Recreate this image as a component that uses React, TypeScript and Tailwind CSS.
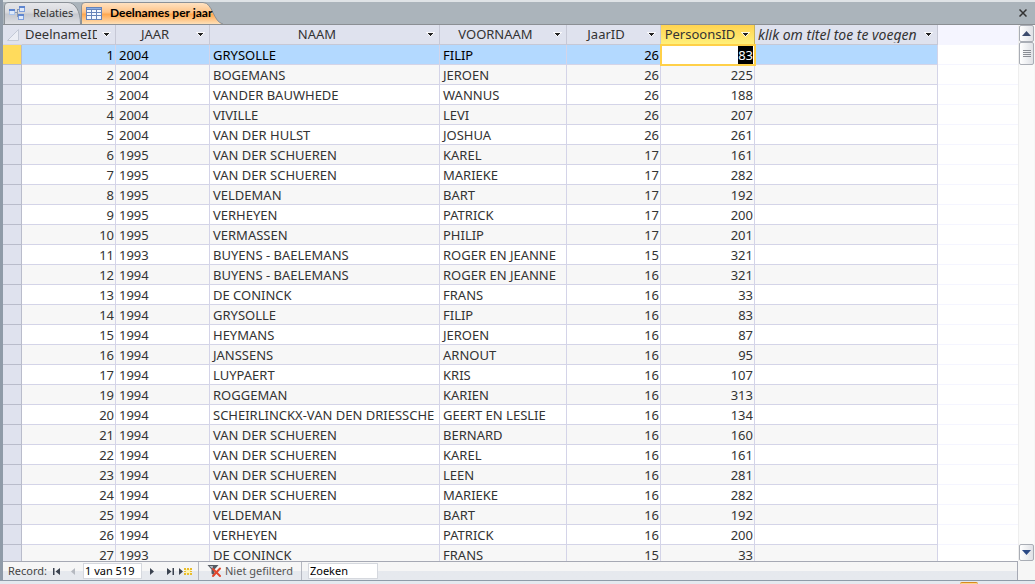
import React from 'react';

type Row = [number, string, string, string, number, number];

const rows: Row[] = [
  [1, '2004', 'GRYSOLLE', 'FILIP', 26, 83],
  [2, '2004', 'BOGEMANS', 'JEROEN', 26, 225],
  [3, '2004', 'VANDER BAUWHEDE', 'WANNUS', 26, 188],
  [4, '2004', 'VIVILLE', 'LEVI', 26, 207],
  [5, '2004', 'VAN DER HULST', 'JOSHUA', 26, 261],
  [6, '1995', 'VAN DER SCHUEREN', 'KAREL', 17, 161],
  [7, '1995', 'VAN DER SCHUEREN', 'MARIEKE', 17, 282],
  [8, '1995', 'VELDEMAN', 'BART', 17, 192],
  [9, '1995', 'VERHEYEN', 'PATRICK', 17, 200],
  [10, '1995', 'VERMASSEN', 'PHILIP', 17, 201],
  [11, '1993', 'BUYENS - BAELEMANS', 'ROGER EN JEANNE', 15, 321],
  [12, '1994', 'BUYENS - BAELEMANS', 'ROGER EN JEANNE', 16, 321],
  [13, '1994', 'DE CONINCK', 'FRANS', 16, 33],
  [14, '1994', 'GRYSOLLE', 'FILIP', 16, 83],
  [15, '1994', 'HEYMANS', 'JEROEN', 16, 87],
  [16, '1994', 'JANSSENS', 'ARNOUT', 16, 95],
  [17, '1994', 'LUYPAERT', 'KRIS', 16, 107],
  [19, '1994', 'ROGGEMAN', 'KARIEN', 16, 313],
  [20, '1994', 'SCHEIRLINCKX-VAN DEN DRIESSCHE', 'GEERT EN LESLIE', 16, 134],
  [21, '1994', 'VAN DER SCHUEREN', 'BERNARD', 16, 160],
  [22, '1994', 'VAN DER SCHUEREN', 'KAREL', 16, 161],
  [23, '1994', 'VAN DER SCHUEREN', 'LEEN', 16, 281],
  [24, '1994', 'VAN DER SCHUEREN', 'MARIEKE', 16, 282],
  [25, '1994', 'VELDEMAN', 'BART', 16, 192],
  [26, '1994', 'VERHEYEN', 'PATRICK', 16, 200],
  [27, '1993', 'DE CONINCK', 'FRANS', 15, 33],
];

const columns = ['DeelnameID', 'JAAR', 'NAAM', 'VOORNAAM', 'JaarID', 'PersoonsID', 'klik om titel toe te voegen'];

const RelationsIcon: React.FC = () => (
  <svg width="16" height="14" viewBox="0 0 16 14" shapeRendering="crispEdges">
    <path d="M6 6.5H8.5V3.5H10M8.5 6V10.5H10" fill="none" stroke="#8c99ad" />
    <rect x="0" y="3" width="6" height="6" fill="#a9c3ec" />
    <rect x="0" y="3" width="6" height="2" fill="#5f86cf" />
    <rect x="1" y="5" width="4" height="3" fill="#dfeafa" />
    <rect x="10" y="0" width="6" height="6" fill="#7f9fdc" />
    <rect x="10" y="0" width="6" height="2" fill="#5f86cf" />
    <rect x="11" y="2" width="4" height="3" fill="#dfeafa" />
    <rect x="9" y="8" width="6" height="6" fill="#7f9fdc" />
    <rect x="9" y="8" width="6" height="2" fill="#5f86cf" />
    <rect x="10" y="10" width="4" height="3" fill="#dfeafa" />
  </svg>
);

const TableIcon: React.FC = () => (
  <svg width="16" height="13" viewBox="0 0 16 13" shapeRendering="crispEdges">
    <rect x="0" y="0" width="16" height="13" fill="#6583ba" />
    <rect x="1" y="1" width="14" height="1" fill="#8fb0e4" />
    {[3, 6, 9].map((y) =>
      [1, 6, 11].map((x) => <rect key={x + '-' + y} x={x} y={y} width="4" height={y === 9 ? 3 : 2} fill="#f4f8ff" />),
    )}
  </svg>
);

const Caret: React.FC = () => (
  <svg width="9" height="5" viewBox="0 0 9 5" shapeRendering="crispEdges">
    <path d="M0 0H9L5 5H4Z" fill="#fff" opacity="0.8" />
    <path d="M2 1H7V2H6V3H5V4H4V3H3V2H2Z" fill="#222" />
  </svg>
);

const FilterIcon: React.FC = () => (
  <svg width="16" height="14" viewBox="0 0 16 14">
    <path d="M0.5 1H11.5L7.5 5.5V12L4.5 9.5V5.5Z" fill="#555b63" />
    <path d="M2.5 2H6L5.5 5Z" fill="#b9bec5" />
    <path d="M6 5L13 12M13 4.5L6 12" stroke="#e2462c" strokeWidth="2" strokeLinecap="round" />
  </svg>
);

const NewRecordIcon: React.FC = () => (
  <svg width="13" height="9" viewBox="0 0 13 9">
    <path d="M0 1V8L4 4.5Z" fill="#3b4350" />
    <rect x="6" y="2" width="6" height="5" fill="#fff3b0" />
    <path d="M5 1H7V3H5ZM8 1H10V3H8ZM11 1H13V3H11ZM5 4H7V5H5ZM11 4H13V5H11ZM5 6H7V8H5ZM8 6H10V8H8ZM11 6H13V8H11Z" fill="#e9bd2c" />
  </svg>
);

const Tabs: React.FC = () => (
  <div role="tablist" className="flex h-6 items-end border-t-2 border-[#dfe3e6] bg-[#abb4bb] pl-px text-xs">
    <button role="tab" aria-selected={false} className="relative flex h-[22px] w-[77px] shrink-0 items-center gap-2 pl-[5px] text-[11px] text-[#333]">
      <svg className="absolute inset-0" width="77" height="22" viewBox="0 0 77 22" aria-hidden="true">
        <defs>
          <linearGradient id="idle" x1="0" y1="0" x2="0" y2="1">
            <stop offset="0" stopColor="#e6e7ea" />
            <stop offset="0.45" stopColor="#d9dade" />
            <stop offset="0.55" stopColor="#c6c8ce" />
            <stop offset="1" stopColor="#dcdee3" />
          </linearGradient>
        </defs>
        <path d="M0.5 22V4Q0.5 0.5 4 0.5H64C71 0.5 76.5 9 76.5 22" fill="url(#idle)" stroke="#8b9197" />
      </svg>
      <span className="relative"><RelationsIcon /></span>
      <span className="relative">Relaties</span>
    </button>
    <button role="tab" aria-selected={true} className="relative flex h-[22px] w-[143px] shrink-0 items-center gap-2 pl-[5px] font-['Lato',sans-serif] font-bold text-black">
      <svg className="absolute inset-0" width="143" height="22" viewBox="0 0 143 22" aria-hidden="true">
        <defs>
          <linearGradient id="active" x1="0" y1="0" x2="0" y2="1">
            <stop offset="0" stopColor="#ffe3c4" />
            <stop offset="0.45" stopColor="#ffc488" />
            <stop offset="0.55" stopColor="#ffa850" />
            <stop offset="1" stopColor="#fee0b8" />
          </linearGradient>
        </defs>
        <path d="M0.5 22V4Q0.5 0.5 4 0.5H122C132 0.5 132 20 142 22" fill="url(#active)" stroke="#8b9197" />
      </svg>
      <span className="relative"><TableIcon /></span>
      <span className="relative whitespace-nowrap">Deelnames per jaar</span>
    </button>
    <button aria-label="Sluiten" className="ml-auto mr-2 flex h-[22px] items-center">
      <svg width="8" height="8" viewBox="0 0 8 8"><path d="M0.5 0.5L7.5 7.5M7.5 0.5L0.5 7.5" stroke="#333" strokeWidth="1.5" /></svg>
    </button>
  </div>
);

const Grid: React.FC = () => (
  <div className="min-w-0 flex-1 overflow-hidden bg-white">
    <table className="w-full table-fixed border-separate border-spacing-0 text-[13px] leading-[17px] text-[#333]">
      <colgroup>
        <col className="w-[19px]" />
        <col className="w-[94px]" />
        <col className="w-[94px]" />
        <col className="w-[230px]" />
        <col className="w-[127px]" />
        <col className="w-[94px]" />
        <col className="w-[94px]" />
        <col className="w-[183px]" />
        <col />
      </colgroup>
      <thead>
        <tr className="bg-[#dfe2ee]">
          <th className="h-5 border-b border-[#d4d4e6] p-0">
            <svg className="ml-1" width="12" height="12" viewBox="0 0 12 12"><path d="M11.5 0.5V11.5H0.5Z" fill="#eceef5" stroke="#c3c9d6" /></svg>
          </th>
          {columns.map((name, i) => (
            <th
              key={name}
              className={
                i === 5
                  ? 'h-5 border-b border-r border-[#c9b458] bg-linear-to-b from-[#ffd350] to-[#fff07a] p-0 font-normal'
                  : i === 6
                    ? 'h-5 border-b border-r border-[#c6c8d6] p-0 text-left text-sm leading-[17px] font-normal italic'
                    : 'h-5 border-b border-r border-[#c6c8d6] p-0 font-normal'
              }
            >
              <div className="flex h-[19px] items-center pl-[3px] pr-1">
                <span className="min-w-0 flex-1 overflow-hidden whitespace-nowrap">{name}</span>
                <button aria-label={'Filter ' + name} className="flex h-4 w-[14px] shrink-0 items-center justify-end"><Caret /></button>
              </div>
            </th>
          ))}
          <td className="border-b border-[#f5f5ff] bg-[#f5f5ff] p-0" />
        </tr>
      </thead>
      <tbody>
        {rows.map((row, i) => (
          <tr key={row[0]} className={i === 0 ? 'bg-[#b3d9ff] text-black' : i % 2 ? 'bg-[#f7f7f7]' : 'bg-white'}>
            <td className={i === 0 ? 'h-5 border-b border-r border-[#b9bccb] bg-[#ffdb5c] p-0' : 'h-5 border-b border-r border-[#b9bccb] bg-[#dfe2ee] p-0'} />
            {row.map((value, c) =>
              i === 0 && c === 5 ? (
                <td key={c} className="relative bg-white p-0 pr-[2px] text-right outline-2 -outline-offset-1 outline-[#ffd048]">
                  <span className="inline-block h-[18px] bg-black pt-px text-white">{value}</span>
                </td>
              ) : (
                <td
                  key={c}
                  className={
                    typeof value === 'number'
                      ? 'overflow-hidden whitespace-nowrap border-b border-r border-[#d4d4e8] p-0 pt-[2px] pr-px text-right'
                      : 'overflow-hidden whitespace-nowrap border-b border-r border-[#d4d4e8] p-0 pt-[2px] pl-[3px]'
                  }
                >
                  {value}
                </td>
              ),
            )}
            <td className="border-b border-r border-[#d4d4e8] p-0" />
            <td className="border-b border-[#f5f5ff] bg-white p-0" />
          </tr>
        ))}
      </tbody>
    </table>
  </div>
);

const Scrollbar: React.FC = () => (
  <div className="mr-px flex w-4 shrink-0 flex-col border-l border-[#eee] bg-[#fafafa]">
    <button aria-label="Omhoog" className="flex h-[17px] items-center justify-center rounded-xs border border-[#a9adb5] bg-linear-to-r from-white to-[#dfe1e6]">
      <svg width="9" height="5" viewBox="0 0 9 5"><path d="M4.5 0L9 5H0Z" fill="#3d4c6e" /></svg>
    </button>
    <div className="flex h-[23px] items-center justify-center rounded-xs border border-[#a9adb5] bg-linear-to-r from-white to-[#dfe1e6]">
      <svg width="8" height="8" viewBox="0 0 8 8" shapeRendering="crispEdges"><path d="M0 0.5H8M0 2.5H8M0 4.5H8M0 6.5H8" stroke="#8a8d94" /></svg>
    </div>
    <button aria-label="Omlaag" className="mt-auto flex h-[17px] items-center justify-center rounded-xs border border-[#a9adb5] bg-linear-to-r from-white to-[#dfe1e6]">
      <svg width="9" height="5" viewBox="0 0 9 5"><path d="M4.5 5L9 0H0Z" fill="#2b4a86" /></svg>
    </button>
  </div>
);

const RecordBar: React.FC = () => (
  <div className="mr-[17px] flex h-[19px] shrink-0 items-center border-r border-t border-[#a6a9b4] bg-linear-to-b from-[#f6f6f6] from-50% to-[#e6e9ee] to-50% pl-[5px] text-[11px] text-[#444]">
    <label htmlFor="record" className="w-[43px]">Record:</label>
    <button aria-label="Eerste record" className="flex w-3 justify-center">
      <svg width="8" height="7" viewBox="0 0 8 7"><path d="M0 0H1.5V7H0ZM7 0V7L2.5 3.5Z" fill="#3b4350" /></svg>
    </button>
    <button aria-label="Vorige record" className="flex w-5 justify-center">
      <svg width="4" height="7" viewBox="0 0 4 7"><path d="M4 0V7L0 3.5Z" fill="#b5b9c0" /></svg>
    </button>
    <input id="record" defaultValue="1 van 519" className="h-4 w-[59px] border border-[#d5d8de] bg-white px-px text-black" />
    <button aria-label="Volgende record" className="flex w-5 justify-center">
      <svg width="4" height="7" viewBox="0 0 4 7"><path d="M0 0V7L4 3.5Z" fill="#3b4350" /></svg>
    </button>
    <button aria-label="Laatste record" className="flex w-4 justify-center">
      <svg width="7" height="7" viewBox="0 0 7 7"><path d="M0 0V7L4.5 3.5ZM5.5 0H7V7H5.5Z" fill="#3b4350" /></svg>
    </button>
    <button aria-label="Nieuw record" className="flex w-5 pl-px"><NewRecordIcon /></button>
    <button className="flex h-full items-center gap-[2px] border-x border-[#b4b7c0] px-2 text-[#555]">
      <FilterIcon />
      Niet gefilterd
    </button>
    <input aria-label="Zoeken" defaultValue="Zoeken" className="ml-[6px] h-4 w-[70px] border border-[#d5d8de] bg-white px-px text-black" />
  </div>
);

const App: React.FC = () => (
  <div className="flex h-screen flex-col overflow-hidden bg-[#f6f6f6] font-['Noto_Sans',sans-serif]">
    <div className="flex min-h-0 flex-1 flex-col border-b border-l-3 border-[#8f9ba8]">
      <Tabs />
      <div className="flex min-h-0 flex-1 border-t border-[#8b8f94]">
        <Grid />
        <Scrollbar />
      </div>
      <RecordBar />
    </div>
    <div className="flex h-[3px] shrink-0 justify-end bg-[#e4e9ef] pr-[57px]">
      <span className="mt-px h-1 w-[18px] rounded-t-xs border-t border-[#d98a1c] bg-[#fbd48d]" />
    </div>
  </div>
);

export default App;
